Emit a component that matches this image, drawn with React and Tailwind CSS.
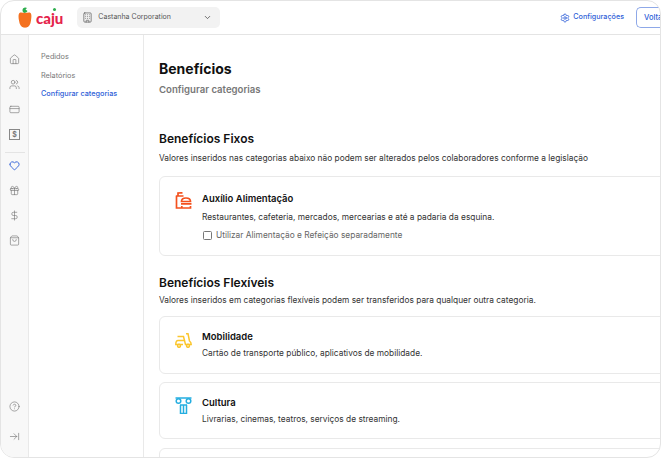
import React from "react";
import {
  Home,
  Users,
  CreditCard,
  Heart,
  Gift,
  DollarSign,
  ShoppingBag,
  CircleHelp,
  ArrowRightToLine,
  Settings,
  Building,
  ChevronDown,
} from "lucide-react";

function Logo() {
  return (
    <div className="flex items-center gap-[4px]">
      <svg width="14" height="21" viewBox="0 0 14 21">
        <path d="M6 6 C4.500 5 4 3 5 1.500 C6 0.300 8 0.200 9 1 L7.500 2.500 L9.500 4 C9 5 7.500 6 6 6 Z" fill="#2eae4e" />
        <path d="M1.500 6 C3 5 5 6 7 6 C9 6 11 5 12.500 6 C13.800 7 13.500 10.500 13 13.500 C12.500 17.500 11 20 8.500 20.500 C7.500 20.700 6.500 20.700 5.500 20.500 C3 20 1.500 17.500 1 13.500 C0.500 10.500 0.200 7 1.500 6 Z" fill="#f4711f" />
      </svg>
      <div className="relative mt-[2px]">
        <span className="block text-[15px] leading-none font-black text-[#e5244b] font-['Lato',sans-serif]">caju</span>
        <span className="absolute right-[7px] top-[-3px] w-[3px] h-[3px] rounded-full bg-[#2eae4e]" />
      </div>
    </div>
  );
}

function SquareDollar() {
  return (
    <div className="w-[11px] h-[11px] border border-[#888] flex items-center justify-center">
      <span className="text-[7px] leading-none font-bold text-[#777]">$</span>
    </div>
  );
}

function MealIcon() {
  return (
    <svg width="17" height="17" viewBox="0 0 17 17" fill="none" stroke="#f4511e" strokeWidth="1.700">
      <path d="M3 4 L3 1 L7.500 0.800 M0.800 4 H8.500 M1.500 4 V16 H6" />
      <path d="M6.500 9.500 C6.500 7 8.500 6 11 6 C13.500 6 15.500 7 15.500 9.500 Z" />
      <path d="M6 11.800 H16.500 M6.800 14 V16 H15.500 V14" />
    </svg>
  );
}

function ScooterIcon() {
  return (
    <svg width="17" height="15" viewBox="0 0 17 15" fill="none" stroke="#fbc62d" strokeWidth="1.500">
      <path d="M11 0.800 H13 L14.500 8 C15.800 9 16.200 10 16.200 11.500 H10.500 L9.500 7.500 H3 C1.500 7.500 0.800 9 0.800 11.500 H8" />
      <path d="M2.500 3.500 H8.500 L9.500 7.500" />
      <circle cx="4" cy="12.800" r="1.500" />
      <circle cx="13" cy="12.800" r="1.500" />
    </svg>
  );
}

function ColumnIcon() {
  return (
    <svg width="17" height="17" viewBox="0 0 17 17" fill="none" stroke="#25aee0" strokeWidth="1.500">
      <path d="M0.500 1 H16.500" />
      <circle cx="3.500" cy="4" r="2.300" />
      <circle cx="13.500" cy="4" r="2.300" />
      <path d="M5 8 H12 M5.500 8 V16.500 H11.500 V8 M8.500 8 V16.500" />
    </svg>
  );
}

function Card({ icon, iconClass, textClass, title, text, children, className }) {
  return (
    <div className={`flex w-[520px] shrink-0 rounded-[6px] border border-[#e9e9e9] pl-[15px] ${className}`}>
      <div className={`w-[27px] shrink-0 ${iconClass}`}>{icon}</div>
      <div>
        <h3 className="text-[9.500px] leading-[14px] font-semibold text-[#111]">{title}</h3>
        <p className={`text-[8.350px] leading-[12px] text-[#333] ${textClass}`}>{text}</p>
        {children}
      </div>
    </div>
  );
}

const navIcons = [Home, Users, CreditCard];

export default function App() {
  return (
    <div className="h-[459px] w-[662px] bg-white overflow-hidden font-['Inter',sans-serif]">
      <div className="h-[458px] w-[661px] flex flex-col border border-[#e4e4e4] rounded-[14px] overflow-hidden">
        {/* Header */}
        <header className="h-[34px] shrink-0 border-b border-[#e4e4e4] flex items-center pl-[17px]">
          <Logo />
          <div className="ml-[14px] w-[143px] h-[21px] rounded-[5px] bg-[#f2f2f2] flex items-center pl-[5px] pr-[8px]">
            <Building className="w-[11px] h-[11px] text-[#555]" strokeWidth={1.500} />
            <span className="ml-[5px] text-[7px] text-[#555]">Castanha Corporation</span>
            <ChevronDown className="ml-auto w-[9px] h-[9px] text-[#444]" strokeWidth={2} />
          </div>
          <div className="ml-auto flex items-center">
            <Settings className="w-[10px] h-[10px] text-[#2f5fd8]" strokeWidth={2} />
            <span className="ml-[3px] text-[7.200px] font-medium text-[#2f5fd8]">Configurações</span>
            <div className="ml-[12px] w-[24px] h-[21px] rounded-l-[5px] border-l border-y border-[#8ea8e8] pl-[7px] flex items-center overflow-hidden">
              <span className="text-[7.500px] font-medium text-[#2f5fd8]">Voltar</span>
            </div>
          </div>
        </header>

        <div className="flex flex-1 min-h-0">
          {/* Icon rail */}
          <aside className="w-[28px] shrink-0 bg-[#f8f8f8] border-r border-[#e9e9e9] flex flex-col items-center pt-[19px] pb-[15px] text-[#777]">
            <div className="flex flex-col gap-[14px] items-center">
              {navIcons.map((Icon, i) => (
                <Icon key={i} className="w-[11px] h-[11px]" strokeWidth={1.400} />
              ))}
              <SquareDollar />
            </div>
            <div className="w-[20px] h-px bg-[#e4e4e4] mt-[12px] mb-[7px]" />
            <div className="flex flex-col gap-[14px] items-center">
              <Heart className="w-[11px] h-[11px] text-[#2f5fd8]" strokeWidth={2} />
              <Gift className="w-[11px] h-[11px]" strokeWidth={1.400} />
              <DollarSign className="w-[11px] h-[11px]" strokeWidth={1.400} />
              <ShoppingBag className="w-[11px] h-[11px]" strokeWidth={1.400} />
            </div>
            <div className="mt-auto flex flex-col gap-[19px] items-center">
              <CircleHelp className="w-[11px] h-[11px]" strokeWidth={1.400} />
              <ArrowRightToLine className="w-[11px] h-[11px]" strokeWidth={1.400} />
            </div>
          </aside>

          {/* Sub navigation */}
          <nav className="w-[115px] shrink-0 border-r border-[#e9e9e9] pt-[16px] pl-[12px] flex flex-col gap-[7.500px] text-[7.300px] leading-[11px] text-[#777]">
            <span>Pedidos</span>
            <span>Relatórios</span>
            <span className="font-medium text-[#2f5fd8]">Configurar categorias</span>
          </nav>

          {/* Main */}
          <main className="flex-1 min-w-0 overflow-hidden pl-[15px] pt-[25px]">
            <h1 className="text-[14px] leading-[18px] font-bold text-[#111]">Benefícios</h1>
            <p className="mt-[5px] text-[9.600px] leading-[13px] font-semibold text-[#777]">Configurar categorias</p>

            <h2 className="mt-[35px] text-[12px] leading-[16px] font-semibold text-[#111]">Benefícios Fixos</h2>
            <p className="mt-[5px] text-[8.350px] leading-[12px] text-[#333] whitespace-nowrap">
              Valores inseridos nas categorias abaixo não podem ser alterados pelos colaboradores conforme a legislação
            </p>

            <Card
              className="mt-[12px] h-[80px] pt-[15px]"
              icon={<MealIcon />}
              textClass="mt-[5px]"
              title="Auxílio Alimentação"
              text="Restaurantes, cafeteria, mercados, mercearias e até a padaria da esquina."
            >
              <label className="mt-[6px] ml-[1px] flex items-center gap-[4px] text-[8.350px] leading-[12px] text-[#666]">
                <span className="w-[9px] h-[9px] rounded-[1.500px] border border-[#777] bg-white" />
                Utilizar Alimentação e Refeição separadamente
              </label>
            </Card>

            <h2 className="mt-[19px] text-[12px] leading-[16px] font-semibold text-[#111]">Benefícios Flexíveis</h2>
            <p className="mt-[3px] text-[8.350px] leading-[12px] text-[#333] whitespace-nowrap">
              Valores inseridos em categorias flexíveis podem ser transferidos para qualquer outra categoria.
            </p>

            <Card
              className="mt-[10px] h-[58px] pt-[13px]"
              iconClass="pt-[3px]"
              textClass="mt-[3px]"
              icon={<ScooterIcon />}
              title="Mobilidade"
              text="Cartão de transporte público, aplicativos de mobilidade."
            />
            <Card
              className="mt-[8px] h-[57px] pt-[13px]"
              iconClass="pt-[1px]"
              textClass="mt-[3px]"
              icon={<ColumnIcon />}
              title="Cultura"
              text="Livrarias, cinemas, teatros, serviços de streaming."
            />
            <div className="mt-[9px] w-[520px] h-[40px] rounded-[6px] border border-[#e9e9e9]" />
          </main>
        </div>
      </div>
    </div>
  );
}
